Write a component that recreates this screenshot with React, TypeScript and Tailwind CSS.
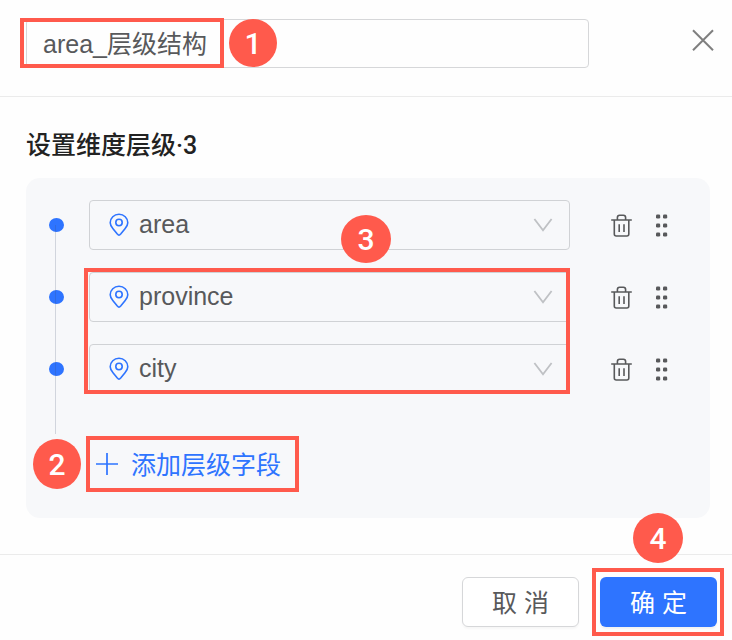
import { useState } from "react"

const fields = ["area", "province", "city"]

const PinIcon = () => (
    <svg className="h-6 w-5 shrink-0" viewBox="0 0 20 24" fill="none" stroke="#2e74ff" strokeWidth="1.6" strokeLinejoin="round">
        <path d="M10 22.2C9.2 22.2 8.6 21.4 7.9 20.6L4 15.8C2.3 13.7 1.2 12 1.2 9.8C1.2 4.9 5.1 1.3 10 1.3S18.8 4.9 18.8 9.8C18.8 12 17.7 13.7 16 15.8L12.1 20.6C11.4 21.4 10.8 22.2 10 22.2Z" />
        <circle cx="10" cy="9.5" r="3.2" />
    </svg>
)

const ChevronIcon = () => (
    <svg className="pointer-events-none h-4 w-5 shrink-0" viewBox="0 0 20 16" fill="none" stroke="#bfc1c4" strokeWidth="1.8">
        <path d="M1.4 2L10 13.2L18.6 2" />
    </svg>
)

const TrashIcon = () => (
    <svg className="h-6 w-[22px]" viewBox="0 0 22 24" fill="none" stroke="#58595b" strokeWidth="1.6" strokeLinejoin="round">
        <path d="M0.2 7H20.8M6.4 6.7V4.6Q6.4 2.2 8.6 2.2H12.4Q14.6 2.2 14.6 4.6V6.7M3.3 7.2V21Q3.3 23 5.2 23H15.9Q17.8 23 17.8 21V7.2" />
        <path d="M8.2 11.2V19M13 11.2V19" />
    </svg>
)

const DragIcon = () => (
    <svg className="h-6 w-[14px]" viewBox="0 0 14 24" fill="#58595b">
        {[3.4, 12.4, 21.4].map((y) => (
            <g key={y}>
                <rect x="1" y={y - 2} width="4.2" height="4.2" rx="1.3" />
                <rect x="8" y={y - 2} width="4.2" height="4.2" rx="1.3" />
            </g>
        ))}
    </svg>
)

const Badge = ({ n, className }: { n: number, className: string }) => (
    <span className={`pointer-events-none absolute z-20 flex items-center justify-center rounded-[50%] bg-[#ff5a4c] pt-px font-['Roboto',sans-serif] text-[30px] font-medium leading-none text-white ${className}`}>
        {n}
    </span>
)

const Frame = ({ className }: { className: string }) => (
    <span className={`pointer-events-none absolute z-10 border-4 border-[#ff5a4c] ${className}`} />
)

const Level = ({ field }: { field: string }) => (
    <li className="flex items-center pl-[23px] pr-[41px]">
        <span className="h-[14px] w-[15px] rounded-[50%] bg-[#2e74ff]" />
        <div className="ml-[25px] flex h-[50px] flex-1 items-center rounded-[4px] border border-[#d0d2d5] pl-[19px] pr-4">
            <PinIcon />
            <select
                aria-label="层级字段"
                defaultValue={field}
                className="-mr-5 h-full min-w-0 flex-1 appearance-none bg-transparent pl-[10px] pr-8 outline-none"
            >
                {fields.map((f) => <option key={f}>{f}</option>)}
            </select>
            <ChevronIcon />
        </div>
        <div className="ml-[41px] flex gap-[22px]">
            <button aria-label="删除"><TrashIcon /></button>
            <button aria-label="拖动"><DragIcon /></button>
        </div>
    </li>
)

export default function App() {
    const [name, setName] = useState("area_层级结构")

    return (
        <div className="bg-[#fefefe] font-['Liberation_Sans','Noto_Sans_CJK_SC',sans-serif] text-[25px] text-[#58595b]">
            <header className="flex items-start justify-between gap-[102px] border-b border-[#ebebeb] pb-7 pl-[26px] pr-[17px] pt-[19px]">
                <div className="relative flex-1">
                    <input
                        aria-label="层级名称"
                        className="block h-[49px] w-full rounded-[4px] border border-[#d6d7d9] bg-transparent px-4 pb-1 outline-none"
                        value={name}
                        onChange={(e) => setName(e.target.value)}
                    />
                    <Frame className="-left-1.5 -top-px h-[50px] w-[204px]" />
                    <Badge n={1} className="left-[203px] top-0 h-12 w-12" />
                </div>
                <button aria-label="关闭" className="pt-[9px]">
                    <svg className="h-6 w-6" viewBox="0 0 24 24" fill="none" stroke="#7f7f7f" strokeWidth="2">
                        <path d="M2 2.3L22 22.3M22 2.3L2 22.3" />
                    </svg>
                </button>
            </header>

            <main className="flex flex-col gap-[14px] pb-9 pl-[26px] pr-[22px] pt-[31px]">
                <h2 className="h-9 font-['Roboto','Noto_Sans_CJK_SC',sans-serif] font-medium leading-9 text-[#222222]">设置维度层级·3</h2>
                <section className="flex flex-col items-stretch gap-[42px] rounded-[14px] bg-[#f7f8fa] pb-[26px] pt-[22px]">
                    <div className="relative">
                        <ul className="flex flex-col gap-[22px]">
                            {fields.map((field) => <Level key={field} field={field} />)}
                        </ul>
                        <span className="absolute -bottom-10 left-[29px] top-[25px] w-px bg-[#3c4a6b]/20" />
                        <Frame className="bottom-0 left-[58px] right-[140px] top-[68px]" />
                        <Badge n={3} className="left-[315px] top-[15px] h-12 w-[50px]" />
                    </div>
                    <div className="flex pl-[60px]">
                        <div className="relative">
                            <button className="flex h-14 items-center gap-3 pl-[9px] pr-[18px] text-[#2e74ff]">
                                <svg className="h-6 w-6" viewBox="0 0 24 24" fill="none" stroke="#2e74ff" strokeWidth="1.7">
                                    <path d="M12 1V23M1 12H23" />
                                </svg>
                                <span className="pt-[3px]">添加层级字段</span>
                            </button>
                            <Frame className="inset-0" />
                            <Badge n={2} className="-left-[53px] top-[3px] h-[50px] w-12" />
                        </div>
                    </div>
                </section>
            </main>

            <footer className="flex justify-end gap-[21px] border-t border-[#ebebeb] pb-[13px] pr-[15px] pt-[22px]">
                <button className="h-[50px] w-[117px] rounded-md border border-[#d6d7d9] bg-white pt-[3px] shadow-[0_2px_2px_rgba(0,0,0,0.03)]">取 消</button>
                <div className="relative">
                    <button className="h-[50px] w-[117px] rounded-md bg-[#2e74ff] pt-[3px] text-white shadow-[0_2px_2px_rgba(0,0,0,0.05)]">确 定</button>
                    <Frame className="-left-2 -top-[9px] h-[68px] w-[132px]" />
                    <Badge n={4} className="-top-16 left-[33px] h-[50px] w-[50px]" />
                </div>
            </footer>
        </div>
    )
}
